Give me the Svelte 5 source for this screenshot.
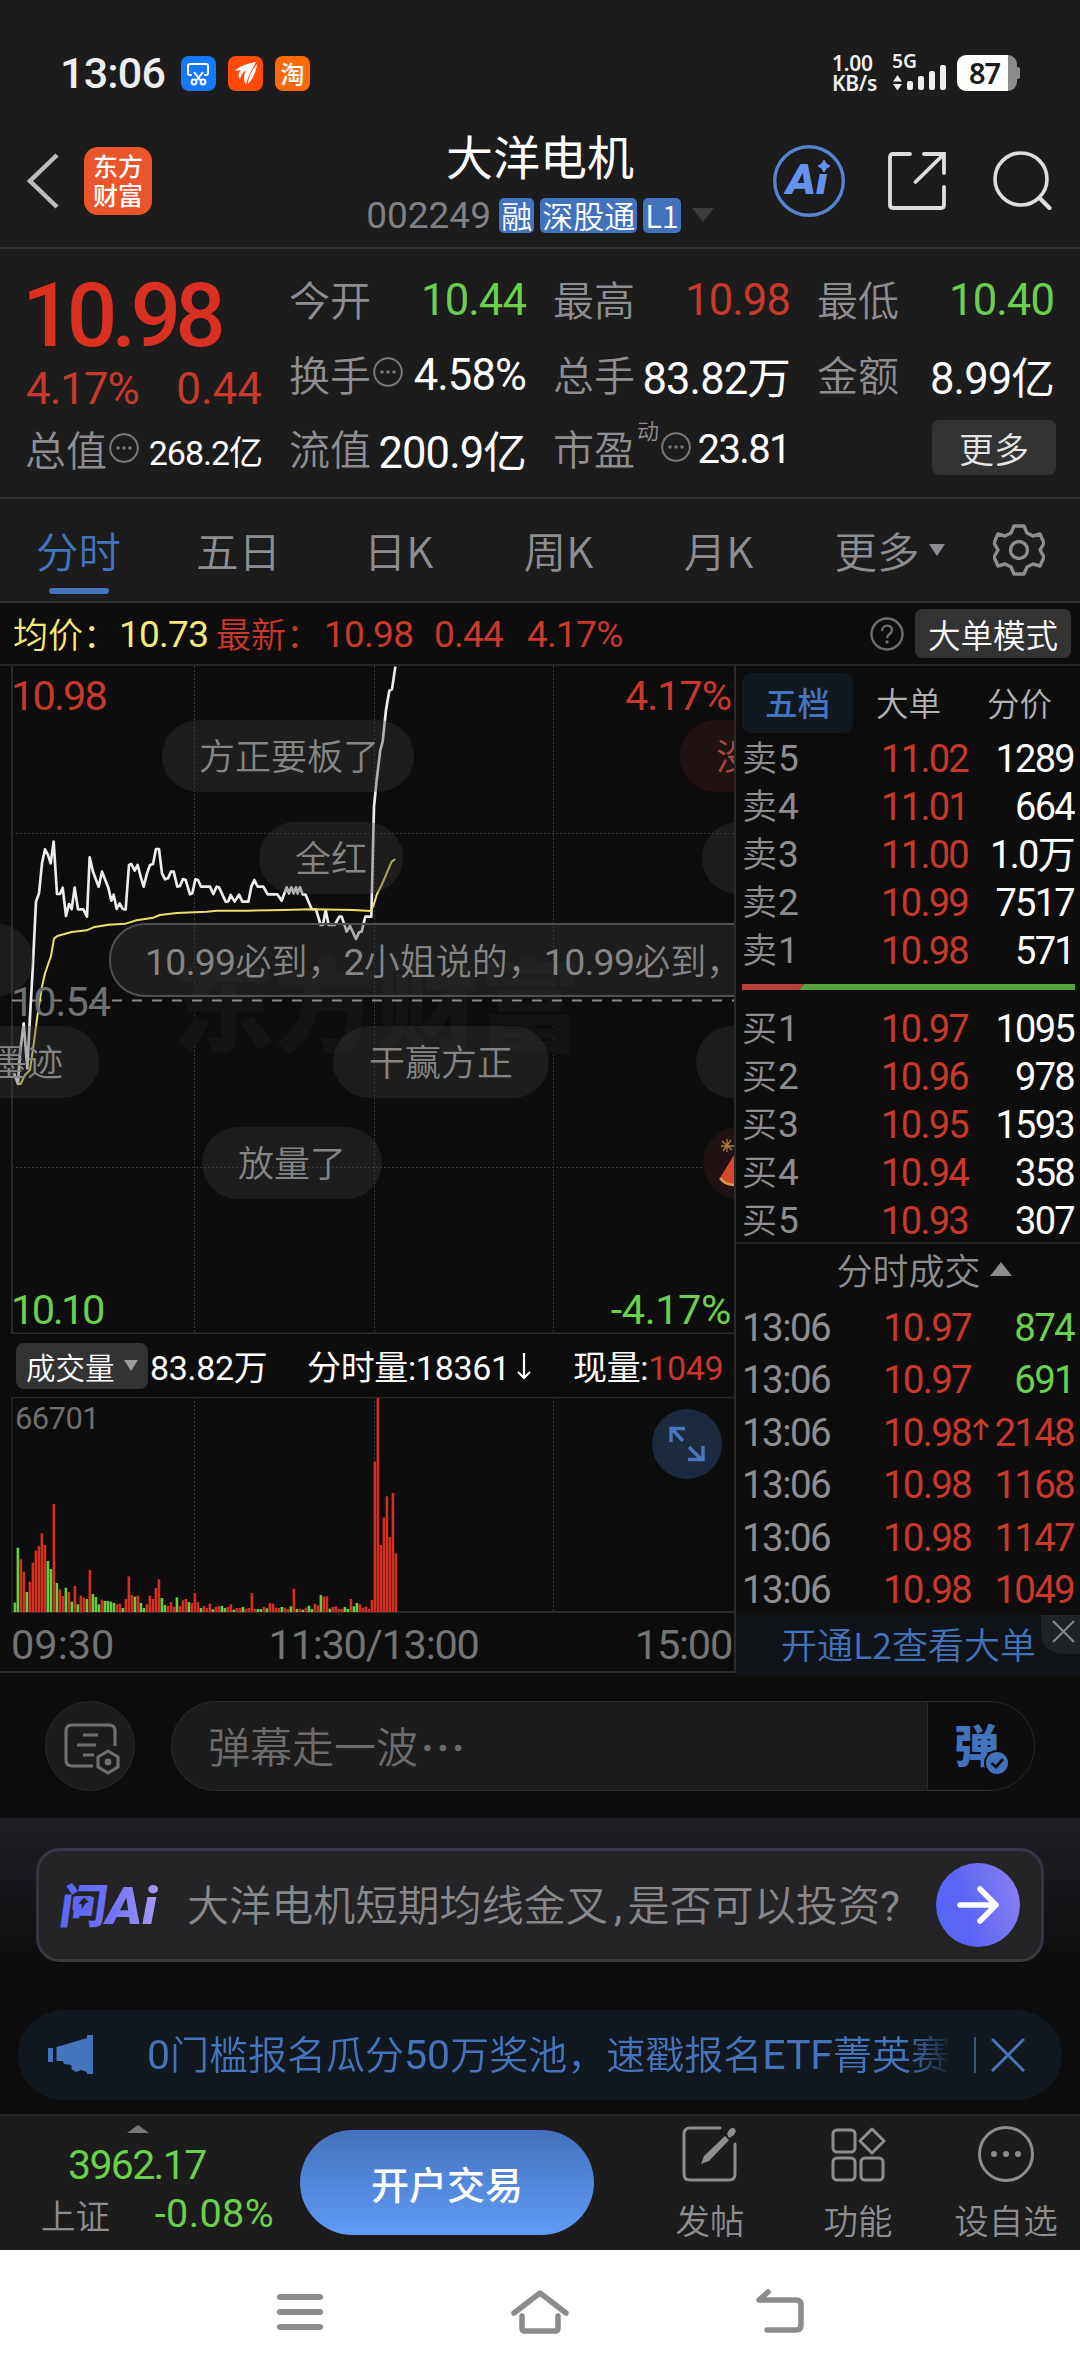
<script>
  const asks = [
    ['卖5', '11.02', '1289'],
    ['卖4', '11.01', '664'],
    ['卖3', '11.00', '1.0万'],
    ['卖2', '10.99', '7517'],
    ['卖1', '10.98', '571']
  ];
  const bids = [
    ['买1', '10.97', '1095'],
    ['买2', '10.96', '978'],
    ['买3', '10.95', '1593'],
    ['买4', '10.94', '358'],
    ['买5', '10.93', '307']
  ];
  const trades = [
    ['10.97', '', '874', 'green'],
    ['10.97', '', '691', 'green'],
    ['10.98', 'up', '2148', 'red'],
    ['10.98', '', '1168', 'red'],
    ['10.98', '', '1147', 'red'],
    ['10.98', '', '1049', 'red']
  ];
  const tabs = ['分时', '五日', '日K', '周K', '月K'];

  // Per-minute volume in thirds of a pixel; negative values are down minutes.
  const volumes = [
    -28, -193, 158, 121, -60, 91, 148, 184, 198, 236, 201, -153, -129, 324, -87, 68, 48, -73, 60, -31,
    78, -23, 49, 43, -39, 126, -54, -45, -23, 37, -33, -33, -31, -27, 23, 25, -12, 39, 107, 51,
    -46, 49, -27, -12, 23, 49, 39, 72, 98, -42, -21, 18, 30, 16, -44, 18, 35, 39, -30, 27,
    57, 30, -12, 18, 12, 25, -8, 15, 18, -18, -12, 15, 23, -7, 12, 12, -15, 9, 12, 57,
    9, -9, -9, 15, -11, 27, 25, 13, 12, -15, 13, 9, -17, 70, -9, 9, -7, 13, -19, -9,
    25, 20, -51, 46, 47, -10, 15, 17, 9, 9, -15, -9, 39, -17, -27, 23, 13, 16, 9, 36,
    451, 642, 201, 283, 347, 225, 357, 176
  ];

  const priceLine =
    '42,1240 54,1272 60,1180 71,1090 82,1225 90,1070 98,930 108,725 117,700 126,610 135,568 144,585 152,610 161,545 171,702 180,702 188,683 198,768 207,732 215,747 224,683 234,748 250,748 261,770 269,592 279,635 296,680 306,635 325,683 334,722 341,704 350,747 359,730 368,747 377,748 387,615 394,612 404,632 413,615 422,650 431,680 441,640 450,615 459,612 468,567 477,567 486,640 495,658 504,655 513,635 521,635 532,680 540,678 549,657 557,660 570,703 577,700 586,658 594,660 603,680 630,680 640,702 650,680 657,682 677,725 685,724 692,705 704,725 717,704 727,725 745,725 754,680 763,660 773,680 790,680 803,703 832,703 845,722 860,682 867,700 874,682 881,700 888,682 893,700 900,682 908,703 916,703 935,747 948,748 962,795 969,795 977,750 986,795 1004,795 1018,770 1025,770 1040,815 1050,798 1068,837 1077,817 1085,815 1096,770 1114,770 1119,560 1122,440 1130,360 1141,270 1148,245 1158,150 1168,92 1176,88 1186,20';
  const avgLine =
    '54,1272 62,1272 75,1245 90,1230 100,1160 112,1070 125,985 135,940 153,888 162,836 172,828 215,816 260,811 280,802 325,794 377,791 410,781 460,773 480,765 530,759 620,755 650,752 740,752 850,750 935,748 1060,750 1112,753 1120,738 1131,702 1145,675 1160,640 1175,605 1186,597';
</script>

{#snippet more()}
  <svg class="dots" viewBox="0 0 30 30" width="30" height="30">
    <circle cx="15" cy="15" r="13.8" fill="none" stroke="#77777a" stroke-width="2" />
    <circle cx="9" cy="15" r="1.8" fill="#77777a" /><circle cx="15" cy="15" r="1.8" fill="#77777a" /><circle cx="21" cy="15" r="1.8" fill="#77777a" />
  </svg>
{/snippet}

<div class="screen">
  <div class="status">
    <span class="clock">13:06</span>
    <svg class="app" viewBox="0 0 35 35" width="35" height="35">
      <rect width="35" height="35" rx="8" fill="#1677ff" />
      <g fill="none" stroke="#fff" stroke-width="2"><path d="M11 19H9a2 2 0 0 1-2-2V10a2 2 0 0 1 2-2h16a2 2 0 0 1 2 2v7a2 2 0 0 1-2 2h-2" /><path d="M13 16l7 9M22 16l-7 9" /><circle cx="13" cy="26" r="2.4" /><circle cx="22" cy="26" r="2.4" /></g>
    </svg>
    <svg class="app" viewBox="0 0 35 35" width="35" height="35">
      <rect width="35" height="35" rx="8" fill="#ff4a0a" />
      <path d="M7 15C11 10 18 8 28 6C24 13 19 23 18 29C15 23 16 18 18 14C15 16 13 19 12 23C10 20 10 17 13 14Z" fill="#fff" />
      <path d="M29 8C28 16 25 23 20 28C20 22 24 14 29 8Z" fill="#fff" />
    </svg>
    <span class="tao">淘</span>
    <div class="net"><span>1.00</span><span>KB/s</span></div>
    <svg class="signal" viewBox="0 0 54 44" width="54" height="44">
      <path d="M0 30.500L4.500 24L9 30.500ZM0 33H9L4.500 39.500Z" fill="#eee" />
      <rect x="14" y="30" width="6" height="9" rx="2" fill="#eee" /><rect x="25" y="25" width="6" height="14" rx="2" fill="#eee" />
      <rect x="36" y="20" width="6" height="19" rx="2" fill="#eee" /><rect x="47" y="14" width="6" height="25" rx="2" fill="#eee" />
      <text x="-1" y="17" textLength="25" lengthAdjust="spacingAndGlyphs" class="fiveg">5G</text>
    </svg>
    <div class="battery"><b>87</b></div><div class="nub"></div>
  </div>

  <header>
    <svg class="back" viewBox="0 0 34 58" width="34" height="58"><path d="M31 3L4 29L31 55" fill="none" stroke="#bdbdbd" stroke-width="4.500" /></svg>
    <div class="logo"><span>东方</span><span>财富</span></div>
    <div class="title">
      <h1>大洋电机</h1>
      <div class="code"><span class="num">002249</span><i>融</i><i>深股通</i><i>L1</i><svg viewBox="0 0 22 14" width="22" height="14"><path d="M0 0H22L11 14Z" fill="#3b3b3b" /></svg></div>
    </div>
    <svg class="ai" viewBox="0 0 72 72" width="72" height="72">
      <text x="13" y="49" textLength="42" lengthAdjust="spacingAndGlyphs">Ai</text>
      <path d="M41 12H62V29H41Z" fill="#1c1c1c" />
      <circle cx="36" cy="36" r="34.300" fill="none" stroke="#5a82d0" stroke-width="3.400" />
      <path d="M51 15Q52.500 19.500 57 21Q52.500 22.500 51 27Q49.500 22.500 45 21Q49.500 19.500 51 15Z" fill="#6592ee" stroke="#6592ee" />
    </svg>
    <svg class="share" viewBox="0 0 58 58" width="58" height="58"><path d="M22 2H5Q2 2 2 5V53Q2 56 5 56H53Q56 56 56 53V35M36 2H56V21M56 2L27.500 30" fill="none" stroke="#dedede" stroke-width="3.800" stroke-linecap="round" /></svg>
    <svg class="search" viewBox="0 0 60 60" width="60" height="60"><circle cx="29" cy="29" r="26" fill="none" stroke="#dedede" stroke-width="3.600" /><path d="M47.500 48L57.500 58" stroke="#dedede" stroke-width="4.200" stroke-linecap="round" /></svg>
  </header>

  <section class="quote">
    <div class="lead">
      <div class="price num">10.98</div>
      <div class="chg num"><span>4.17%</span><span>0.44</span></div>
      <div class="cell small"><label>总值</label>{@render more()}<b class="num">268.2亿</b></div>
    </div>
    <div class="cols">
      <div class="cell"><label>今开</label><b class="num green">10.44</b></div>
      <div class="cell"><label>最高</label><b class="num red">10.98</b></div>
      <div class="cell"><label>最低</label><b class="num green">10.40</b></div>
      <div class="cell"><label>换手</label>{@render more()}<b class="num">4.58%</b></div>
      <div class="cell"><label>总手</label><b class="num">83.82万</b></div>
      <div class="cell"><label>金额</label><b class="num">8.99亿</b></div>
      <div class="cell"><label>流值</label><b class="num">200.9亿</b></div>
      <div class="cell pe"><label>市盈</label><sup>动</sup>{@render more()}<b class="num">23.81</b></div>
      <div class="cell"><button class="morebtn">更多</button></div>
    </div>
  </section>

  <nav class="tabs">
    {#each tabs as t, i}<div class="tab" class:on={i === 0}>{t}</div>{/each}
    <div class="tab last">更多<svg viewBox="0 0 16 12" width="16" height="12"><path d="M0 0H16L8 12Z" fill="#8e8e92" /></svg></div>
    <svg class="gear" viewBox="0 0 52 52" width="52" height="52">
      <path d="M21 2H31L34 9L40 12L47 10L51 19L47 26L51 33L47 42L40 40L34 43L31 50H21L18 43L12 40L5 42L1 33L5 26L1 19L5 10L12 12L18 9Z" fill="none" stroke="#8e8e92" stroke-width="3.400" stroke-linejoin="round" />
      <circle cx="26" cy="26" r="8.500" fill="none" stroke="#8e8e92" stroke-width="3.400" />
    </svg>
  </nav>

  <div class="info">
    <span class="yellow">均价：</span><span class="num yellow">10.73</span>
    <span class="red">最新：</span><span class="num red">10.98</span><span class="num red">0.44</span><span class="num red">4.17%</span>
    <svg viewBox="0 0 34 34" width="34" height="34"><circle cx="17" cy="17" r="15.500" fill="none" stroke="#6e6e70" stroke-width="2.400" /><path d="M12 14C12 7 22 7 22 13C22 17 17 17 17 21" fill="none" stroke="#6e6e70" stroke-width="2.400" /><circle cx="17" cy="25" r="1.700" fill="#6e6e70" /></svg>
    <button>大单模式</button>
  </div>

  <main>
    <div class="left">
      <div class="chart">
        <svg viewBox="0 0 734 668" width="734" height="668">
          <g stroke="#3a3a3a" stroke-width="1" stroke-dasharray="2 2">
            <path d="M194.500 0V668M374.500 0V668M553.500 0V668M12 167.500H734M12 501.500H734" />
          </g>
          <path d="M12 0V668M12 667.500H734" stroke="#2b2b2b" stroke-width="2" fill="none" />
          <text class="mark" x="172" y="378">东方财富</text>
          <path d="M12 334.500H734" stroke="#8c8c8c" stroke-width="2" stroke-dasharray="10 10" />
          <g transform="translate(0 -6) scale(.33333)" fill="none" stroke-linejoin="round">
            <polyline points={priceLine} stroke="#ededed" stroke-width="8" />
            <polyline points={avgLine} stroke="#ece069" stroke-width="6" />
          </g>
        </svg>
        <span class="num lab tl red">10.98</span><span class="num lab tr red">4.17%</span>
        <span class="num lab ml">10.54</span>
        <span class="num lab bl green">10.10</span><span class="num lab br green">-4.17%</span>
        <div class="pill p1">方正要板了</div>
        <div class="pill p2">全红</div>
        <div class="pill p3"><span class="num">10.99</span>必到，<span class="num">2</span>小姐说的，<span class="num">10.99</span>必到，</div>
        <div class="pill p4">墨迹</div>
        <div class="pill p5">干赢方正</div>
        <div class="pill p6">放量了</div>
        <div class="pill p7">没</div>
        <div class="pill p8"></div>
        <div class="pill p9"></div>
        <div class="pill p10"></div>
        <div class="pill p11">
          <svg viewBox="0 0 31 72" width="31" height="72"><path d="M31 28L17 51Q22 58 31 58Z" fill="#d8472c" /><path d="M17 51Q22 58 31 58" stroke="#d99a4a" stroke-width="2.500" fill="none" /><path d="M19 14l10 9M28 13l-8 11M24 12v13M18 19h13" stroke="#a98436" stroke-width="1.300" /></svg>
        </div>
      </div>
      <div class="volhead">
        <button>成交量<svg viewBox="0 0 14 11" width="14" height="11"><path d="M0 0H14L7 11Z" fill="#9a9a9a" /></svg></button>
        <span class="num">83.82万</span>
        <span class="num v2">分时量:18361<svg viewBox="0 0 14 28" width="14" height="28"><path d="M7 1V26M1 20L7 26L13 20" stroke="#fff" stroke-width="2.200" fill="none" /></svg></span>
        <span class="num v3">现量:<em class="red">1049</em></span>
      </div>
      <div class="volume">
        <svg viewBox="0 0 734 216" width="734" height="216">
          <path d="M194.500 0V214M374.500 0V214M553.500 0V214" stroke="#3a3a3a" stroke-dasharray="2 2" />
          <path d="M12 216V.5H734" stroke="#2b2b2b" stroke-width="1.500" fill="none" />
          <path d="M12 215H734" stroke="#2b2b2b" stroke-width="2" />
          {#each volumes as v, i}
            <rect x={13.6 + i * 3} y={215 - Math.abs(v) / 3} width="2.600" height={Math.abs(v) / 3} fill={v > 0 ? '#d5301f' : '#62d03f'} />
          {/each}
        </svg>
        <span class="num vmax">66701</span>
        <svg class="expand" viewBox="0 0 70 70" width="70" height="70"><circle cx="35" cy="35" r="35" fill="#1c2a40" /><path d="M19 33V19.500H33M20 20L31 32M37 38L49 50M51 37V50.500H36" fill="none" stroke="#4877bd" stroke-width="3.400" /></svg>
      </div>
      <div class="axis num"><span>09:30</span><span class="mid">11:30/13:00</span><span class="end">15:00</span></div>
    </div>

    <aside>
      <div class="btabs"><span class="sel">五档</span><span>大单</span><span>分价</span></div>
      {#each asks as r}<div class="row"><label>{r[0][0]}<span class="num">{r[0][1]}</span></label><span class="num red">{r[1]}</span><span class="num">{r[2]}</span></div>{/each}
      <svg class="ratio" viewBox="0 0 333 6" width="333" height="6"><path d="M0 0H62L57 6H0Z" fill="#b8403a" /><path d="M62 0H333V6H57Z" fill="#54a33c" /></svg>
      {#each bids as r}<div class="row"><label>{r[0][0]}<span class="num">{r[0][1]}</span></label><span class="num red">{r[1]}</span><span class="num">{r[2]}</span></div>{/each}
      <div class="thead">分时成交<svg viewBox="0 0 22 14" width="22" height="14"><path d="M0 14H22L11 0Z" fill="#8e8e92" /></svg></div>
      {#each trades as t}
        <div class="trow"><span class="num t">13:06</span><span class="num red">{t[0]}</span>
          <span class="num {t[3]}">{#if t[1]}<svg viewBox="0 0 16 22" width="16" height="22"><path d="M8 22V2M1 9L8 2L15 9" stroke="#c83a2e" stroke-width="2.800" fill="none" /></svg>{/if}{t[2]}</span></div>
      {/each}
      <div class="l2"><span>开通L2查看大单</span><svg viewBox="0 0 39 39" width="39" height="39"><path d="M0 0H39V39H24Q0 39 0 15Z" fill="#1f2226" /><path d="M12 6L33 27M33 6L12 27" stroke="#85878a" stroke-width="2.200" /></svg></div>
    </aside>
  </main>

  <div class="danmu">
    <div class="round">
      <svg viewBox="0 0 56 52" width="56" height="52"><g fill="none" stroke="#707072" stroke-width="3.200"><path d="M29 43H8Q2 43 2 37V8Q2 2 8 2H45Q51 2 51 8V23" /><path d="M19 12H34M13 22H32M19 32H30" /><path d="M44 28L54 34V44L44 50L34 44V34Z" stroke-linejoin="round" /></g><circle cx="44" cy="39" r="3.400" fill="#707072" /></svg>
    </div>
    <div class="input"><span>弹幕走一波<span class="ell">···</span></span>
      <div class="send"><b>弹</b><svg viewBox="0 0 26 26" width="26" height="26"><circle cx="13" cy="13" r="12" fill="#4272bc" stroke="#0d0d0d" stroke-width="2" /><path d="M7.500 13L12 17L19 9" fill="none" stroke="#0d0d0d" stroke-width="2.800" /></svg></div>
    </div>
  </div>

  <section class="ask">
    <div class="card">
      <svg class="wen" viewBox="0 0 98 46" width="98" height="46">
        <defs><linearGradient id="g" gradientUnits="userSpaceOnUse" x1="0" y1="0" x2="98" y2="0"><stop offset="0" stop-color="#5b67f2" /><stop offset=".5" stop-color="#6e70f5" /><stop offset="1" stop-color="#a79af5" /></linearGradient></defs>
        <text class="wq" transform="translate(-2 41) skewX(-8)">问</text>
        <path d="M16 14H30Q33.500 14 33 17.500L31.500 25.500Q31 29 28 29H23L17 34L17.500 29H15Q12 29 12.500 26L13 17.500Q13.500 14 16 14Z" fill="#5b67f2" />
        <path d="M24 15.500L29 20L26 21L21.500 27L22 22.500L18.500 21.500Z" fill="#242426" />
        <text class="wa" x="46" y="42" textLength="51" lengthAdjust="spacingAndGlyphs">Ai</text>
      </svg>
      <p>大洋电机短期均线金叉<span class="num comma">,</span>是否可以投资<span class="num">?</span></p>
      <div class="go"><svg viewBox="0 0 42 40" width="42" height="40"><path d="M3 20H38M23 4L39 20L23 36" fill="none" stroke="#fff" stroke-width="5.500" stroke-linecap="round" stroke-linejoin="round" /></svg></div>
    </div>
    <div class="notice">
      <svg viewBox="0 0 46 40" width="46" height="40"><path d="M0 13H5V27H0ZM8.500 12L39 3V0H45V39H39V37L33 35L28 37L23.500 34V30L16 29L15 26H8.500Z" fill="#4474bb" /></svg>
      <p><span class="num">0</span>门槛报名瓜分<span class="num">50</span>万奖池，速戳报名<span class="num">ETF</span>菁英赛》</p>
      <i></i>
      <svg viewBox="0 0 34 34" width="34" height="34"><path d="M1 1L33 33M33 1L1 33" stroke="#4474bb" stroke-width="3" /></svg>
    </div>
  </section>

  <footer>
    <div class="index">
      <svg viewBox="0 0 22 8" width="22" height="8"><path d="M0 8H22L11 0Z" fill="#77777a" /></svg>
      <span class="num green big">3962.17</span>
      <div><label>上证</label><span class="num green">-0.08%</span></div>
    </div>
    <button class="open">开户交易</button>
    <div class="act"><svg viewBox="0 0 56 56" width="56" height="56"><g fill="none" stroke="#8e8e92" stroke-width="3"><path d="M38 2H8Q2 2 2 8V48Q2 54 8 54H47Q53 54 53 48V18" stroke-linecap="round" /></g><path d="M47 4Q52 -1 54 5L52 9L47 12L45 8ZM43 10L47 14L27 35L19 38L22 30Z" fill="#8e8e92" /></svg>发帖</div>
    <div class="act"><svg viewBox="0 0 56 56" width="56" height="56"><g fill="none" stroke="#8e8e92" stroke-width="3"><rect x="3" y="4" width="22" height="22" rx="4" /><rect x="3" y="32" width="22" height="22" rx="4" /><rect x="31" y="32" width="22" height="22" rx="4" /><path d="M42 3L54 15L42 27L30 15Z" stroke-linejoin="round" /></g></svg>功能</div>
    <div class="act"><svg viewBox="0 0 56 56" width="56" height="56"><circle cx="28" cy="28" r="26.500" fill="none" stroke="#8e8e92" stroke-width="3" /><g fill="#8e8e92"><circle cx="16" cy="28" r="3" /><circle cx="28" cy="28" r="3" /><circle cx="40" cy="28" r="3" /></g></svg>设自选</div>
  </footer>

  <div class="sysnav">
    <svg viewBox="0 0 60 50" width="60" height="50"><path d="M10 9H50M10 24H50M10 39H50" stroke="#8c8c8c" stroke-width="6" stroke-linecap="round" /></svg>
    <svg viewBox="0 0 60 50" width="60" height="50"><path d="M4 25L30 5L56 25M12 28V40Q12 43 15 43H45Q48 43 48 40V28" fill="none" stroke="#8c8c8c" stroke-width="5.500" stroke-linecap="round" stroke-linejoin="round" /></svg>
    <svg viewBox="0 0 60 50" width="60" height="50"><path d="M18 4L9 12H46Q51 12 51 17V37Q51 42 46 42H17" fill="none" stroke="#8c8c8c" stroke-width="5.500" stroke-linecap="round" stroke-linejoin="round" /></svg>
  </div>
</div>

<style>
  :global(body) { background: #0d0d0d; }
  .screen { width: 1080px; height: 2376px; overflow: hidden; display: flex; flex-direction: column; background: #0d0d0d; color: #fff; font-family: 'Noto Sans CJK SC', sans-serif; font-weight: 350; }
  .screen * { box-sizing: border-box; }
  svg { display: block; flex: none; }
  button { border: 0; padding: 0; font: inherit; color: inherit; }
  p, h1 { margin: 0; }
  i, em { font-style: normal; }
  .num { font-family: Roboto, 'Noto Sans CJK SC', sans-serif; letter-spacing: -0.02em; font-weight: 370; }
  .red { color: #c9382b; }
  .green { color: #6bd04c; }
  .yellow { color: #f7ea77; }

  .status { height: 109px; background: #1c1c1c; display: flex; align-items: center; padding: 37px 60px 0 60px; flex: none; }
  .clock { font: 500 43px Roboto, sans-serif; width: 121px; color: #eee; letter-spacing: -0.8px; }
  .app { margin-right: 12px; }
  .tao { width: 35px; height: 35px; border-radius: 8px; background: #fb6a0a; font-weight: 500; font-size: 24px; line-height: 34px; text-align: center; }
  .net { margin-left: auto; display: flex; flex-direction: column; font: 600 21px/20px 'Noto Sans', sans-serif; letter-spacing: -0.3px; color: #eee; width: 61px; }
  .fiveg { font: 600 19px 'Noto Sans', sans-serif; fill: #eee; }
  .battery { margin-left: 10px; width: 60px; height: 36px; border-radius: 9px; background: linear-gradient(90deg, #fff 51px, #8b8b8b 51px); color: #1c1c1c; font: 600 29px/36px 'Noto Sans', sans-serif; padding-left: 12px; }
  .battery b { font-weight: 600; letter-spacing: -1px; }
  .nub { width: 3px; height: 12px; background: #8b8b8b; border-radius: 0 2px 2px 0; }

  header { height: 140px; flex: none; background: #1c1c1c; border-bottom: 2px solid #303030; display: grid; grid-template-columns: 58px 202px 510px 115px 104px 60px; padding: 0 0 0 26px; }
  .back { margin-top: 43px; }
  .logo { width: 68px; height: 68px; border-radius: 14px; background: #ea552c; display: flex; flex-direction: column; font-weight: 500; font-size: 25px; line-height: 29px; text-align: center; margin-top: 38px; padding-top: 4px; }
  .title { width: 510px; display: flex; flex-direction: column; align-items: center; margin-left: -1px; }
  h1 { font-weight: 400; font-size: 47px; line-height: 56px; margin-top: 18px; }
  .code { display: flex; align-items: center; height: 64px; color: #808085; font-size: 37px; }
  .code .num { width: 133px; letter-spacing: 0; }
  .code i { background: #4272bb; color: #fff; border-radius: 5px; font-size: 31px; line-height: 33px; height: 35px; padding: 0 2px; margin-right: 6px; }
  .code svg { margin-left: 5px; }
  .ai { margin-top: 36px; margin-left: -23px; }
  .ai text { font: italic 900 42px Roboto, sans-serif; fill: #6592ee; }
  .share { margin-top: 43px; margin-left: -23px; }
  .search { margin-top: 41px; margin-left: -23px; }

  .quote { height: 250px; flex: none; background: #1c1c1c; border-bottom: 2px solid #303030; display: flex; gap: 28px; padding: 14px 26px 0; }
  .lead { width: 236px; }
  .price { font-size: 89px; font-weight: 500; color: #d93021; line-height: 105px; letter-spacing: -0.065em; height: 100px; margin-left: -4px; }
  .chg { display: flex; justify-content: space-between; color: #c9382b; font-size: 44px; line-height: 52px; height: 50px; letter-spacing: -0.025em; }
  .chg span:last-child { letter-spacing: 0; }
  .cols { display: grid; grid-template-columns: repeat(3, 236px); column-gap: 28px; grid-auto-rows: 74.500px; }
  .cell { display: flex; align-items: center; height: 75px; white-space: nowrap; }
  .cell label { font-size: 41px; color: #8e8e92; line-height: 50px; margin: -5px 0 0 -1px; }
  .cell b { margin-left: auto; font-size: 43.500px; }
  .cell .dots { margin: -6px 0 0 2px; }
  .cell.small b { font-size: 34px; letter-spacing: -0.03em; }
  .pe sup { font-size: 22px; line-height: 24px; color: #8e8e92; align-self: flex-start; margin-left: 2px; margin-top: 5px; }
  .cell.pe b { font-size: 40px; letter-spacing: -0.04em; }
  .morebtn { width: 124px; height: 55px; margin-left: auto; background: #333; border-radius: 7px; font-size: 35px; color: #e4e4e4; line-height: 48px; margin-right: -2px; margin-top: -4px; }

  .tabs { height: 104px; flex: none; background: #1c1c1c; border-bottom: 2px solid #303030; display: flex; align-items: flex-start; }
  .tab { width: 160px; text-align: center; font-size: 42.500px; line-height: 62px; color: #8e8e92; padding: 20px 3px 0 0; display: flex; flex-direction: column; align-items: center; }
  .tab.on { color: #4474bd; }
  .tab.on::after { content: ''; width: 60px; height: 6px; border-radius: 3px; background: #4474bd; margin-top: 7px; }
  .tab.last { width: 180px; flex-direction: row; justify-content: center; gap: 9px; padding-right: 1px; }
  .gear { margin: 25px 0 0 13px; }

  .info { height: 63px; flex: none; border-bottom: 2px solid #282828; display: grid; grid-template-columns: 106px 97px 108px 110px 93px 343px 45px 156px; align-items: center; padding-left: 13px; font-size: 35px; white-space: nowrap; }
  .info .num { font-size: 37px; margin-top: 2px; }
  .info > span:not(.num) { margin-top: -2px; }
  .info button { height: 49px; border-radius: 7px; background: #333; font-size: 32.500px; line-height: 44px; }

  main { display: flex; height: 1007px; flex: none; border-bottom: 2px solid #2b2b2b; }
  .left { width: 736px; flex: none; border-right: 2px solid #2b2b2b; }
  .chart { position: relative; height: 668px; overflow: hidden; }
  .mark { font-size: 103px; font-weight: 900; fill: #141414; letter-spacing: -1px; }
  .lab { position: absolute; font-size: 41.500px; line-height: 42px; letter-spacing: -0.045em; }
  .tl { left: 11px; top: 9px; } .tr { right: 3px; top: 9px; letter-spacing: -0.025em; }
  .ml { left: 11px; top: 315px; color: #707070; letter-spacing: -0.025em; }
  .bl { left: 11px; bottom: 3px; letter-spacing: -0.06em; } .br { right: 3px; bottom: 3px; letter-spacing: -0.01em; }
  .pill { position: absolute; height: 72px; border-radius: 36px; background: rgba(60, 60, 60, 0.35); color: #858585; font-size: 36px; line-height: 68px; padding: 0 36px; white-space: nowrap; }
  .p1 { left: 162px; top: 54px; width: 252px; padding-left: 37px; }
  .p2 { left: 259px; top: 156px; }
  .p3 { left: 109px; top: 257px; height: 74px; width: 800px; border: 2px solid #505050; padding-left: 34px; }
  .p3 .num { font-size: 37.500px; }
  .p4 { right: 635px; top: 360px; }
  .p5 { left: 333px; top: 360px; }
  .p6 { left: 202px; top: 461px; }
  .p7 { left: 680px; top: 54px; background: #211313; color: #a8463f; }
  .p8 { left: 702px; top: 156px; width: 100px; }
  .p9 { left: 696px; top: 360px; width: 100px; }
  .p10 { left: -80px; top: 258px; width: 113px; }
  .p11 { left: 703px; top: 461px; width: 100px; background: #211313; padding: 0; }

  .volhead { height: 63px; display: grid; grid-template-columns: 134px 157px 266px auto; align-items: center; padding-left: 16px; font-size: 34px; white-space: nowrap; }
  .volhead .num { letter-spacing: -0.01em; }
  .volhead button { width: 132px; height: 46px; background: #333; border-radius: 8px; font-size: 29.500px; line-height: 42px; display: flex; align-items: center; gap: 9px; padding-left: 10px; }
  .v2 { display: flex; align-items: center; }
  .v2 svg { margin-left: 7px; }
  .volume { height: 216px; position: relative; }
  .vmax { position: absolute; left: 15px; top: 4px; font-size: 31px; line-height: 36px; color: #6e6e6e; }
  .expand { position: absolute; left: 652px; top: 12px; }
  .axis { display: flex; justify-content: space-between; color: #747474; font-size: 41.500px; line-height: 63px; padding: 0 2px 0 11px; letter-spacing: 0; }
  .axis .mid { letter-spacing: -0.03em; margin-left: -2px; }
  .axis .end { letter-spacing: -0.03em; }

  aside { width: 344px; display: flex; flex-direction: column; }
  .btabs { display: flex; height: 68px; padding: 7px 0 0 6px; font-size: 32.500px; line-height: 57px; color: #b2b2b2; flex: none; }
  .btabs span { width: 111px; height: 60px; text-align: center; }
  .btabs .sel { background: #101820; border-radius: 9px; color: #4474bd; font-weight: 500; }
  .row { display: grid; grid-template-columns: 90px 136px 1fr; height: 48px; line-height: 50px; align-items: center; padding: 0 6px; font-size: 38px; flex: none; }
  .row > .num { letter-spacing: -0.045em; }
  .row label { color: #8e8e92; font-size: 35px; white-space: nowrap; margin-top: -3px; }
  .row label .num { font-size: 37px; margin-left: 1px; }
  .row > span { text-align: right; }
  .ratio { margin: 10px 0 14px 6px; }
  .thead { height: 57px; flex: none; border-top: 2px solid #232323; margin-top: -2px; display: flex; justify-content: center; align-items: flex-start; gap: 9px; font-size: 36px; color: #8e8e92; padding-left: 32px; line-height: 50px; margin-bottom: 2px; }
  .thead svg { margin-top: 18px; }
  .trow { display: grid; grid-template-columns: 100px 129px 1fr; height: 52.400px; line-height: 53px; flex: none; padding: 0 6px; font-size: 38.500px; white-space: nowrap; }
  .trow .num { text-align: right; letter-spacing: -0.045em; }
  .trow .num:last-child { display: flex; justify-content: flex-end; }
  .trow svg { margin: 12px 5px 0 0; }
  .trow .num.t { text-align: left; color: #8e8e92; letter-spacing: -0.04em; }
  .l2 { margin-top: auto; height: 60px; background: #101419; display: flex; justify-content: space-between; color: #4272b8; font-size: 36px; line-height: 57px; padding-left: 45px; flex: none; white-space: nowrap; }

  .danmu { height: 145px; flex: none; display: flex; padding: 28px 45px 0; gap: 36px; }
  .round { width: 90px; height: 90px; border-radius: 50%; background: #1c1c1c; border: 1.500px solid #2a2a2a; padding: 21px 0 0 18px; }
  .input { width: 864px; height: 90px; border-radius: 45px; border: 1.500px solid #2c2c2c; background: #1c1c1c; display: flex; justify-content: space-between; overflow: hidden; font-size: 42px; line-height: 86px; color: #6c6c6c; padding-left: 36px; }
  .ell { font-family: Roboto, sans-serif; font-weight: 600; letter-spacing: 2.500px; margin-left: 3px; font-size: 44px; }
  .send { width: 107px; background: #0d0d0d; border-left: 1.500px solid #2c2c2c; position: relative; padding-left: 26px; }
  .send b { font-size: 45px; font-weight: 900; color: #4272bc; line-height: 78px; }
  .send svg { position: absolute; left: 56px; top: 48px; }

  .ask { height: 296px; flex: none; background: linear-gradient(#1f1f26 0, #0d0d0d 150px); padding: 30px 18px 0; }
  .card { margin: 0 18px; height: 114px; border-radius: 24px; border: 3px solid; border-color: #37374d #353545 #3a3a3c #353545; background: #242426; display: flex; align-items: center; padding: 0 21px; }
  .wq { font-size: 47px; font-weight: 900; fill: url(#g); }
  .wa { font: italic 900 52px Roboto, sans-serif; fill: url(#g); }
  .card p { margin-left: 29px; font-size: 42px; color: #88888a; white-space: nowrap; line-height: 60px; width: 725px; letter-spacing: 0.1px; }
  .comma { padding: 0 6px 0 6px; }
  .go { width: 84px; height: 84px; border-radius: 50%; background: linear-gradient(75deg, #5966f5 35%, #8f80f0); padding: 22px 0 0 21px; flex: none; margin-left: auto; }
  .notice { margin-top: 48px; height: 90px; border-radius: 45px; background: #111820; display: flex; align-items: center; padding-left: 30px; color: #4474bb; }
  .notice p { margin: -3px 0 0 53px; width: 810px; font-size: 39px; line-height: 60px; white-space: nowrap; overflow: hidden; mask-image: linear-gradient(90deg, #000 760px, transparent 808px); }
  .notice .num { font-size: 41px; letter-spacing: 0; }
  .notice i { width: 2px; height: 36px; background: #37597f; margin: 0 15px 0 17px; }

  footer { height: 136px; flex: none; background: #1c1c1c; border-top: 2px solid #262626; display: flex; }
  .index { width: 300px; padding: 9px 26px 0 41px; display: flex; flex-direction: column; }
  .index > svg { margin-left: 86px; }
  .index .big { font-size: 41px; line-height: 50px; margin: 7px 0 0 27px; letter-spacing: -0.04em; }
  .index div { display: flex; justify-content: space-between; font-size: 39.500px; line-height: 48px; }
  .index div .num { letter-spacing: 0.01em; }
  .index label { font-size: 34.500px; color: #8e8e92; }
  .open { width: 294px; height: 105px; margin: 14px 42px 0 0; border-radius: 53px; background: linear-gradient(#4471bd, #609bf5); font-size: 38px; font-weight: 500; line-height: 100px; flex: none; }
  .act { width: 148px; display: flex; flex-direction: column; align-items: center; font-size: 34.500px; line-height: 50px; color: #8e8e92; padding-top: 10px; gap: 12px; white-space: nowrap; }

  .sysnav { height: 126px; flex: none; background: #fff; display: flex; justify-content: center; gap: 180px; padding-top: 38px; }
</style>
